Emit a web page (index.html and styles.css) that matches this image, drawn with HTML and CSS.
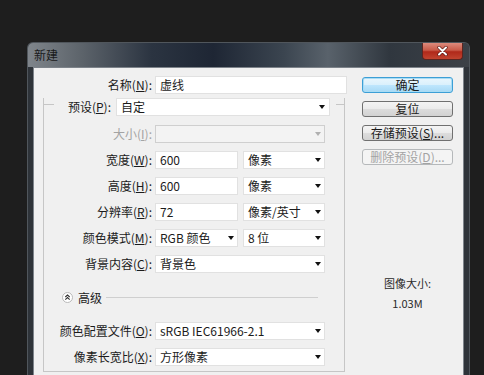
FILE: index.html
```html
<!DOCTYPE html>
<html lang="zh-CN">
<head>
    <meta charset="UTF-8">
    <meta name="viewport" content="width=device-width, initial-scale=1.0">
    <title>新建</title>
    <link rel="stylesheet" href="styles.css">
</head>
<body>

<div class="window">
    <div class="titlebar">
        <span class="title">新建</span>
        <span class="close">
            <svg width="11" height="10" viewBox="0 0 11 10">
                <path d="M2 1.5 L9 8.5 M9 1.5 L2 8.5" stroke="#5a1410" stroke-width="3.2" stroke-linecap="round"/>
                <path d="M2 1.5 L9 8.5 M9 1.5 L2 8.5" stroke="#fff" stroke-width="2" stroke-linecap="round"/>
            </svg>
        </span>
    </div>

    <div class="client">
        <div class="form">
            <div class="name-row">
                <label class="lbl name-lbl">名称(<u>N</u>):</label>
                <div class="field name-field">虚线</div>
            </div>

            <div class="group">
                <div class="group-head">
                    <span class="edge edge-l"></span>
                    <label class="lbl preset-lbl">预设(<u>P</u>):</label>
                    <div class="field select preset"><span>自定</span><i class="arrow"></i></div>
                    <span class="edge edge-r"></span>
                </div>

                <div class="rows">
                    <div class="row disabled">
                        <label class="lbl">大小(<u>I</u>):</label>
                        <div class="field select wide"><span></span><i class="arrow"></i></div>
                    </div>
                    <div class="row">
                        <label class="lbl">宽度(<u>W</u>):</label>
                        <div class="field num">600</div>
                        <div class="field select unit"><span>像素</span><i class="arrow"></i></div>
                    </div>
                    <div class="row">
                        <label class="lbl">高度(<u>H</u>):</label>
                        <div class="field num">600</div>
                        <div class="field select unit"><span>像素</span><i class="arrow"></i></div>
                    </div>
                    <div class="row">
                        <label class="lbl">分辨率(<u>R</u>):</label>
                        <div class="field num">72</div>
                        <div class="field select unit"><span>像素/英寸</span><i class="arrow"></i></div>
                    </div>
                    <div class="row">
                        <label class="lbl">颜色模式(<u>M</u>):</label>
                        <div class="field select num"><span>RGB 颜色</span><i class="arrow"></i></div>
                        <div class="field select unit"><span>8 位</span><i class="arrow"></i></div>
                    </div>
                    <div class="row">
                        <label class="lbl">背景内容(<u>C</u>):</label>
                        <div class="field select wide"><span>背景色</span><i class="arrow"></i></div>
                    </div>
                </div>

                <div class="adv-row">
                    <svg class="adv-icon" width="11" height="11" viewBox="0 0 11 11">
                        <circle cx="5.5" cy="5.5" r="5" fill="#fff" stroke="#b9b9b9"/>
                        <path d="M3.3 5 L5.5 3 L7.7 5 M3.3 7.6 L5.5 5.6 L7.7 7.6" fill="none" stroke="#333" stroke-width="1.1"/>
                    </svg>
                    <span class="adv-text">高级</span>
                    <span class="adv-line"></span>
                </div>

                <div class="rows adv-rows">
                    <div class="row">
                        <label class="lbl">颜色配置文件(<u>O</u>):</label>
                        <div class="field select wide"><span>sRGB IEC61966-2.1</span><i class="arrow"></i></div>
                    </div>
                    <div class="row">
                        <label class="lbl">像素长宽比(<u>X</u>):</label>
                        <div class="field select wide"><span>方形像素</span><i class="arrow"></i></div>
                    </div>
                </div>
            </div>
        </div>

        <div class="actions">
            <button class="btn btn-default">确定</button>
            <button class="btn">复位</button>
            <button class="btn">存储预设(<u>S</u>)...</button>
            <button class="btn" disabled>删除预设(<u>D</u>)...</button>

            <div class="img-size">
                <div>图像大小:</div>
                <div class="img-size-val">1.03M</div>
            </div>
        </div>
    </div>
</div>

</body>
</html>
```

FILE: styles.css
```css
* {
    box-sizing: border-box;
}
html, body {
    margin: 0;
}
body {
    background-color: #1e1e1e;
    font-family: "Noto Sans CJK SC", "Liberation Sans", sans-serif;
    font-size: 12px;
    color: #1b1b1b;
    height: 375px;
    overflow: hidden;
    padding: 42px 0 0 27px;
}

/* window frame */
.window {
    width: 443px;
    background-color: #2e3339;
    border: 1px solid #50565c;
    border-bottom: none;
    border-radius: 6px 6px 0 0;
    padding: 0 5px;
}
.titlebar {
    display: flex;
    justify-content: space-between;
    align-items: flex-start;
    height: 24px;
    margin: 0 -5px;
    padding: 0 6px;
    border-radius: 5px 5px 0 0;
    background: linear-gradient(90deg, #7f858b 0%, #5d646b 12%, #2b3441 28%, #1e2634 42%, #3b4550 58%, #59626b 68%, #30373f 82%, #3c4147 100%);
}
.title {
    line-height: 24px;
    color: #1a1a1a;
}
.close {
    display: flex;
    align-items: center;
    justify-content: center;
    width: 41px;
    height: 17px;
    border: 1px solid #5b2520;
    border-top: none;
    border-radius: 0 0 4px 4px;
    background: linear-gradient(#dc8a7c 0%, #c85a48 45%, #b0291a 55%, #c0432f 100%);
}

/* client area */
.client {
    display: flex;
    gap: 15px;
    background-color: #f0f0f0;
    border: 1px solid #7d838a;
    border-bottom: none;
    padding: 8px 10px 20px 9px;
}
.form {
    width: 304px;
}
.lbl {
    text-align: right;
    line-height: 18px;
    white-space: nowrap;
}
.field {
    height: 18px;
    background-color: #fff;
    border: 1px solid #e1e1e1;
    padding-left: 4px;
    line-height: 16px;
    white-space: nowrap;
}
.select {
    display: flex;
    justify-content: space-between;
    align-items: center;
    padding-right: 3px;
}
.arrow {
    width: 0;
    height: 0;
    border-left: 3.5px solid transparent;
    border-right: 3.5px solid transparent;
    border-top: 4px solid #111;
}

.name-row {
    display: flex;
}
.name-lbl {
    width: 109px;
    margin-right: 3px;
}
.name-field {
    width: 192px;
}

/* group box */
.group {
    width: 302px;
    margin-top: 10px;
    border: 1px solid #c6c6c6;
    border-top: none;
    padding-bottom: 5px;
}
.group-head {
    display: flex;
    align-items: flex-start;
    margin: -6px -1px 0;
}
.edge {
    height: 0;
    margin-top: 6px;
    border-top: 1px solid #c6c6c6;
}
.edge-l {
    width: 11px;
}
.edge-r {
    width: 9px;
    margin-left: 6px;
}
.preset-lbl {
    width: 57px;
    margin-right: 5px;
}
.preset {
    width: 214px;
    padding-right: 4px;
}

.rows {
    display: flex;
    flex-direction: column;
    gap: 8px;
    padding-top: 9px;
}
.row {
    display: flex;
}
.row .lbl {
    width: 108px;
    margin-right: 3px;
}
.num {
    width: 83px;
    margin-right: 5px;
}
.unit {
    width: 82px;
}
.wide {
    width: 170px;
}
.disabled .lbl {
    color: #a3a3a3;
}
.disabled .field {
    background-color: #f3f3f3;
    border-color: #cfcfcf;
}
.disabled .arrow {
    border-top-color: #b0b0b0;
}

.adv-row {
    display: flex;
    align-items: center;
    height: 18px;
    margin-top: 15px;
    padding-left: 18px;
    margin-right: 26px;
}
.adv-text {
    margin-left: 5px;
}
.adv-line {
    flex: 1;
    height: 0;
    margin-left: 4px;
    margin-top: 1px;
    border-top: 1px solid #cfcfcf;
}
.adv-rows {
    padding-top: 16px;
}

/* buttons */
.actions {
    width: 91px;
    display: flex;
    flex-direction: column;
    gap: 8px;
    padding-top: 1px;
}
.btn {
    height: 16px;
    padding: 0;
    font-family: inherit;
    font-size: 12px;
    line-height: 14px;
    color: #1b1b1b;
    border: 1px solid #707070;
    border-radius: 3px;
    background: linear-gradient(#f4f4f4 0%, #ebebeb 50%, #dddddd 51%, #d2d2d2 100%);
}
.btn-default {
    border-color: #3c9fd6;
    box-shadow: inset 0 0 0 1px #a9dcf4;
    background: linear-gradient(#eaf6fd 0%, #d9f0fc 50%, #bee6fd 51%, #a7d9f5 100%);
}
.btn:disabled {
    color: #a3a3a3;
    border-color: #b5b8ba;
    background: #f4f4f4;
}
.img-size {
    margin-top: 100px;
    text-align: center;
    font-size: 11px;
    line-height: 20px;
    color: #2a2a2a;
}
```
